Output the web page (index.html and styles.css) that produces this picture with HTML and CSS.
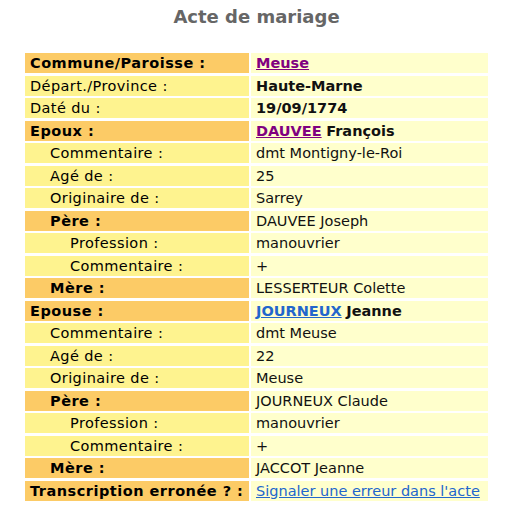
FILE: index.html
```html
<!DOCTYPE html>
<html lang="fr">
<head>
<meta charset="utf-8">
<title>Acte de mariage</title>
<link rel="stylesheet" href="styles.css">
</head>
<body>
<div class="page">
  <h1 class="title">Acte de mariage</h1>
  <div class="acte">
    <div class="lab head">Commune/Paroisse :</div>
    <div class="val"><a class="visited bold" href="#">Meuse</a></div>

    <div class="lab">Départ./Province :</div>
    <div class="val bold">Haute-Marne</div>

    <div class="lab">Daté du :</div>
    <div class="val bold">19/09/1774</div>

    <div class="lab head">Epoux :</div>
    <div class="val"><a class="visited bold" href="#">DAUVEE</a>&nbsp;<b>François</b></div>

    <div class="lab l1">Commentaire :</div>
    <div class="val">dmt Montigny-le-Roi</div>

    <div class="lab l1">Agé de :</div>
    <div class="val">25</div>

    <div class="lab l1">Originaire de :</div>
    <div class="val">Sarrey</div>

    <div class="lab head l1">Père :</div>
    <div class="val">DAUVEE Joseph</div>

    <div class="lab l2">Profession :</div>
    <div class="val">manouvrier</div>

    <div class="lab l2">Commentaire :</div>
    <div class="val">+</div>

    <div class="lab head l1">Mère :</div>
    <div class="val">LESSERTEUR Colette</div>

    <div class="lab head">Epouse :</div>
    <div class="val"><a class="link bold" href="#">JOURNEUX</a>&nbsp;<b>Jeanne</b></div>

    <div class="lab l1">Commentaire :</div>
    <div class="val">dmt Meuse</div>

    <div class="lab l1">Agé de :</div>
    <div class="val">22</div>

    <div class="lab l1">Originaire de :</div>
    <div class="val">Meuse</div>

    <div class="lab head l1">Père :</div>
    <div class="val">JOURNEUX Claude</div>

    <div class="lab l2">Profession :</div>
    <div class="val">manouvrier</div>

    <div class="lab l2">Commentaire :</div>
    <div class="val">+</div>

    <div class="lab head l1">Mère :</div>
    <div class="val">JACCOT Jeanne</div>

    <div class="lab head">Transcription erronée ? :</div>
    <div class="val"><a class="link" href="#">Signaler une erreur dans l'acte</a></div>
  </div>
</div>
</body>
</html>
```
FILE: styles.css
```css
html, body {
  margin: 0;
  padding: 0;
  background: #ffffff;
}

body {
  font-family: "DejaVu Sans", Verdana, sans-serif;
  font-size: 14.5px;
  color: #000000;
}

.page {
  width: 463px;
  margin-left: 25px;
  padding-top: 6px;
}

.title {
  margin: 0;
  font-size: 18px;
  line-height: 21px;
  font-weight: bold;
  color: #666666;
  text-align: center;
}

.acte {
  margin-top: 26px;
  display: grid;
  grid-template-columns: 224px 237px;
  grid-auto-rows: 20px;
  column-gap: 2px;
  row-gap: 2.5px;
}

.lab,
.val {
  display: flex;
  align-items: center;
  padding-left: 5px;
  line-height: 20px;
  white-space: nowrap;
}

.lab {
  background: #fef38f;
  letter-spacing: 0.4px;
}

.lab.head {
  background: #fccb66;
  font-weight: bold;
  letter-spacing: 0.5px;
}

.l1 {
  padding-left: 25px;
}

.l2 {
  padding-left: 45px;
}

.val {
  background: #ffffcc;
  color: #111111;
}

.bold {
  font-weight: bold;
}

.visited {
  color: #800080;
  text-decoration: underline;
}

.link {
  color: #2266cc;
  text-decoration: underline;
}
```
